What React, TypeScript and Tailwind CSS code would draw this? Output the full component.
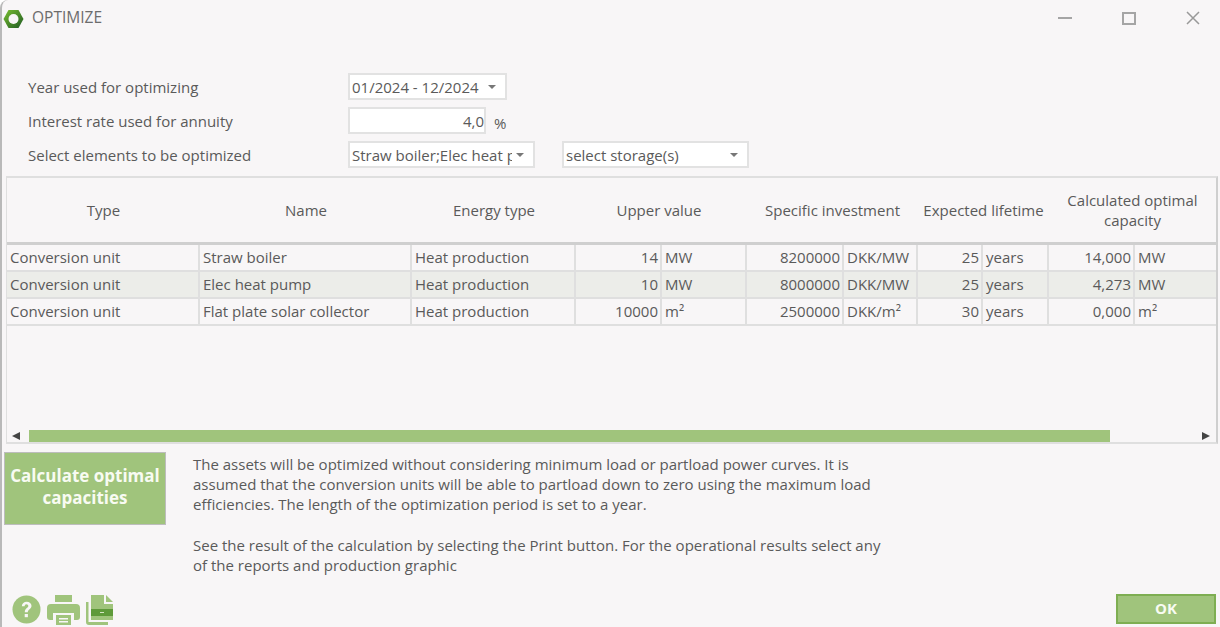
const rows = [
  { type: 'Conversion unit', name: 'Straw boiler', energy: 'Heat production', upper: '14', upperUnit: 'MW', invest: '8200000', investUnit: 'DKK/MW', life: '25', calc: '14,000', calcUnit: 'MW' },
  { type: 'Conversion unit', name: 'Elec heat pump', energy: 'Heat production', upper: '10', upperUnit: 'MW', invest: '8000000', investUnit: 'DKK/MW', life: '25', calc: '4,273', calcUnit: 'MW' },
  { type: 'Conversion unit', name: 'Flat plate solar collector', energy: 'Heat production', upper: '10000', upperUnit: 'm²', invest: '2500000', investUnit: 'DKK/m²', life: '30', calc: '0,000', calcUnit: 'm²' },
];

const gridCols = 'grid grid-cols-[193px_212px_164px_86px_85px_97px_74px_65px_66px_86px_1fr]';

function Caret() {
  return <span className="h-0 w-0 border-x-[4px] border-t-[4px] border-x-transparent border-t-[#777]" />;
}

function Select({ label, className }: { label: string; className: string }) {
  return (
    <div className={`flex h-[27px] items-center justify-between overflow-hidden border-2 border-[#e2e2e2] bg-white pl-[2px] pr-[9px] ${className}`}>
      <span className="overflow-hidden whitespace-nowrap">{label}</span>
      <span className="ml-1 flex shrink-0"><Caret /></span>
    </div>
  );
}

function Cell({ children, right, last }: { children: string; right?: boolean; last?: boolean }) {
  return (
    <div className={`flex items-center overflow-hidden whitespace-nowrap pb-[2px] ${right ? 'justify-end pr-[2px]' : 'px-[3px]'} ${last ? '' : 'border-r-2 border-[#dfdfdf]'}`}>
      {children}
    </div>
  );
}

function Logo() {
  return (
    <svg width="21" height="20" viewBox="0 0 21 20" className="shrink-0">
      <defs>
        <linearGradient id="logoGreen" x1="0" y1="0" x2="1" y2="1">
          <stop offset="0" stopColor="#7abf30" />
          <stop offset="1" stopColor="#1f5a24" />
        </linearGradient>
      </defs>
      <path d="M5.500 1h10l5 9-5 9h-10l-5-9z" fill="url(#logoGreen)" />
      <circle cx="10.500" cy="10" r="5" fill="#f8f6f7" />
    </svg>
  );
}

function HelpIcon() {
  return (
    <svg width="29" height="29" viewBox="0 0 29 29">
      <circle cx="14.500" cy="14.500" r="14" fill="#a0c47c" />
      <path d="M9.800 11.200c.2-3 2.300-4.500 4.900-4.500 2.800 0 4.800 1.700 4.800 4.100 0 3.400-3.700 3.500-3.700 6.400h-3c0-4 3.500-4.200 3.500-6.200 0-1-.8-1.700-1.800-1.700-1.200 0-1.800.8-1.900 1.900z" fill="#f8f6f7" />
      <rect x="12.700" y="19" width="3.200" height="3.200" fill="#f8f6f7" />
    </svg>
  );
}

function PrintIcon() {
  return (
    <svg width="33" height="30" viewBox="0 0 33 30">
      <path d="M8 0h17v7H8z" fill="#a0c47c" />
      <path d="M4 9h25a4 4 0 0 1 4 4v9a3 3 0 0 1-3 3h-3v-7H6v7H3a3 3 0 0 1-3-3v-9a4 4 0 0 1 4-4z" fill="#a0c47c" />
      <path d="M9 20h15v10H9z" fill="#a0c47c" />
      <path d="M12 23h9v1.500h-9zM12 26h9v1.500h-9z" fill="#f8f6f7" />
    </svg>
  );
}

function ReportIcon() {
  return (
    <svg width="28" height="30" viewBox="0 0 28 30">
      <path d="M0 7h2.500v20H22v3H3a3 3 0 0 1-3-3z" fill="#a0c47c" />
      <path d="M5 0h13v9h9v16H5z" fill="#a0c47c" />
      <path d="M20 0l7 7h-7z" fill="#a0c47c" />
      <path d="M5 14h22v7H5z" fill="#5f9a3a" />
      <path d="M14 17h4v1h-4z" fill="#d5e5c4" />
    </svg>
  );
}

export default function App() {
  return (
    <div className="flex h-[627px] w-[1220px] flex-col overflow-hidden rounded-tl-lg border-l-2 border-[#b9b9b9] bg-[#f8f6f7] font-['Open_Sans',sans-serif] text-[15px] leading-5 text-[#5a5a5a]">
      <div className="flex h-[37px] shrink-0 items-center pl-[1px] pt-px">
        <Logo />
        <span className="ml-2 -translate-y-[2px] text-[15.5px] text-[#6c6c6c]">OPTIMIZE</span>
        <div className="ml-auto mr-5 flex -translate-y-px items-center gap-[50px]">
          <span className="h-[2px] w-[14px] bg-[#a5a5a5]" />
          <span className="h-[13px] w-[14px] border-2 border-[#a5a5a5]" />
          <svg width="14" height="14" viewBox="0 0 14 14"><path d="M1 1l12 12M13 1L1 13" stroke="#999" strokeWidth="1.500" /></svg>
        </div>
      </div>

      <div className="mt-9 flex flex-col gap-[7px] pl-[26px]">
        <div className="flex items-center">
          <span className="w-[320px]">Year used for optimizing</span>
          <Select label="01/2024 - 12/2024" className="w-[159px]" />
        </div>
        <div className="flex items-center">
          <span className="w-[320px]">Interest rate used for annuity</span>
          <div className="flex h-[27px] w-[138px] items-center justify-end border-2 border-[#e2e2e2] bg-white">4,0</div>
          <span className="ml-2 mt-[5px]">%</span>
        </div>
        <div className="flex items-center">
          <span className="w-[320px]">Select elements to be optimized</span>
          <Select label="Straw boiler;Elec heat pump" className="w-[187px]" />
          <Select label="select storage(s)" className="ml-[27px] w-[187px]" />
        </div>
      </div>

      <div className="ml-1 mt-2 flex h-[268px] w-[1212px] shrink-0 flex-col border-2 border-l border-[#dfdfdf] border-r-[#cfcfcf]">
        <div className={`${gridCols} h-[67px] shrink-0 border-b-[3px] border-[#cfcfcf] text-center`}>
          <div className="flex items-center justify-center">Type</div>
          <div className="flex items-center justify-center">Name</div>
          <div className="flex items-center justify-center">Energy type</div>
          <div className="col-span-2 flex items-center justify-center pr-[5px]">Upper value</div>
          <div className="col-span-2 flex items-center justify-center">Specific investment</div>
          <div className="col-span-2 flex items-center justify-center">Expected lifetime</div>
          <div className="col-span-2 flex items-center justify-center">Calculated optimal<br />capacity</div>
        </div>
        {rows.map((row, i) => (
          <div key={row.name} className={`${gridCols} h-[27px] shrink-0 border-b-2 border-[#dfdfdf] ${i === 1 ? 'bg-[#ecede9]' : ''}`}>
            <Cell>{row.type}</Cell>
            <Cell>{row.name}</Cell>
            <Cell>{row.energy}</Cell>
            <Cell right>{row.upper}</Cell>
            <Cell>{row.upperUnit}</Cell>
            <Cell right>{row.invest}</Cell>
            <Cell>{row.investUnit}</Cell>
            <Cell right>{row.life}</Cell>
            <Cell>years</Cell>
            <Cell right>{row.calc}</Cell>
            <Cell last>{row.calcUnit}</Cell>
          </div>
        ))}
        <div className="mt-auto flex h-[12px] items-center pl-[5px]">
          <span className="h-0 w-0 border-y-[4px] border-r-[8px] border-y-transparent border-r-[#444]" />
          <div className="ml-[9px] h-[12px] w-[1081px] bg-[#a0c47c]" />
          <span className="ml-auto mr-[6px] h-0 w-0 border-y-[4px] border-l-[8px] border-y-transparent border-l-[#444]" />
        </div>
      </div>

      <div className="mt-2 flex flex-1 items-start pl-[2px]">
        <button className="flex h-[73px] w-[162px] shrink-0 items-center justify-center border border-[#bdbdbd] bg-[#a0c47c] pb-1 text-[17px] font-bold leading-[22px] text-[#f8fbf2]">
          Calculate optimal<br />capacities
        </button>
        <div className="ml-[27px] w-[700px] pt-[2px] leading-5">
          <p>The assets will be optimized without considering minimum load or partload power curves. It is assumed that the conversion units will be able to partload down to zero using the maximum load efficiencies. The length of the optimization period is set to a year.</p>
          <p className="mt-[21px]">See the result of the calculation by selecting the Print button. For the operational results select any of the reports and production graphic</p>
        </div>
      </div>

      <div className="flex h-[33px] shrink-0 items-start pl-[10px] pr-[2px]">
        <div className="mt-px flex items-start gap-[6px]">
          <HelpIcon />
          <PrintIcon />
          <ReportIcon />
        </div>
        <button className="ml-auto mr-[2px] h-[30px] w-[100px] border-2 border-[#7eae52] bg-[#a0c47c] pb-[3px] text-[15px] font-bold text-[#f8fbf2]">OK</button>
      </div>
    </div>
  );
}
